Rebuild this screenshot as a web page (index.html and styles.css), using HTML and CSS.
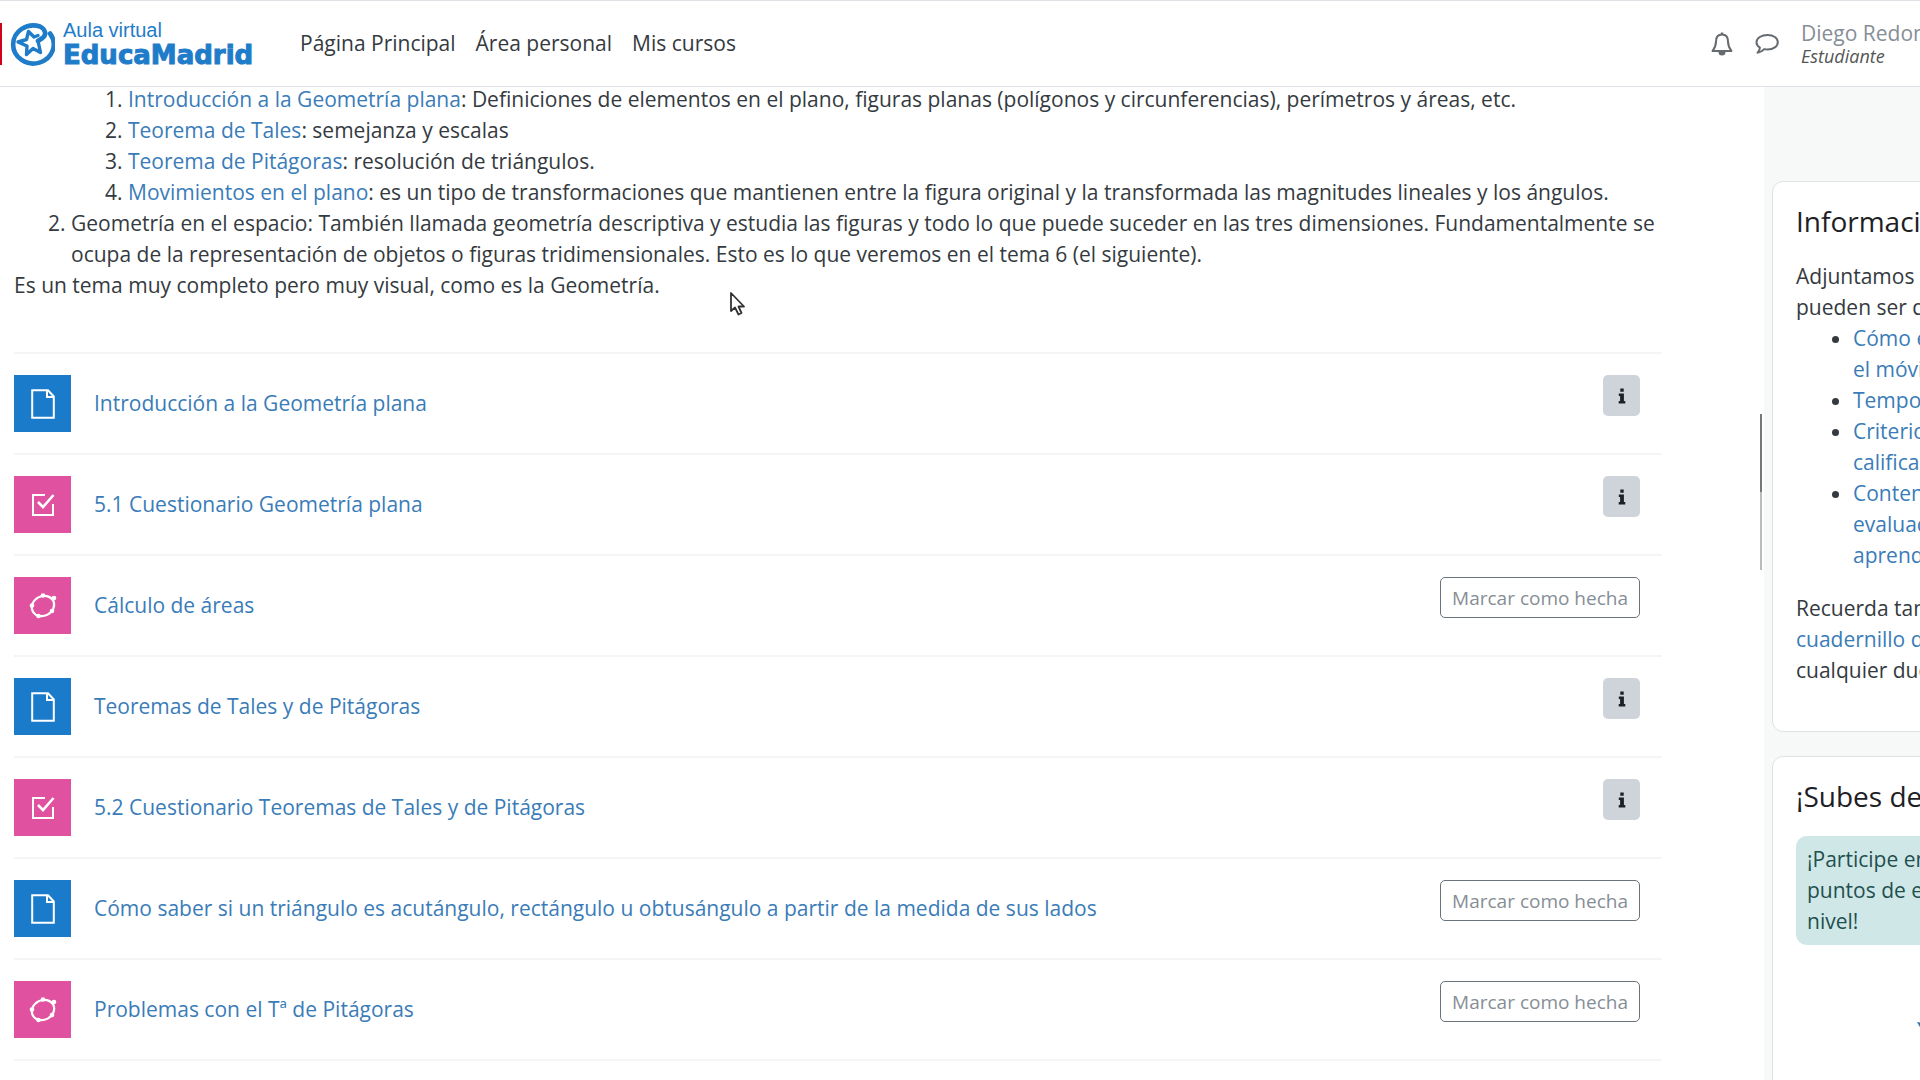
FILE: index.html
```html
<!DOCTYPE html>
<html lang="es">
<head>
  <meta charset="utf-8">
  <title>Aula virtual EducaMadrid</title>
  <link rel="stylesheet" href="styles.css">
</head>
<body>

<!-- Shared icons -->
<svg class="sprite" width="0" height="0" aria-hidden="true">
  <symbol id="icon-page" viewBox="0 0 24 30">
    <path d="M1.2 1.2H17L22.8 7.5V28.8H1.2Z M16 1.2V8H22.8" fill="none" stroke="currentColor" stroke-width="2"/>
  </symbol>
  <symbol id="icon-quiz" viewBox="0 0 24 24">
    <path d="M14 2H2V22H22V11" fill="none" stroke="currentColor" stroke-width="2"/>
    <path d="M7 9L12 14L22.500 2" fill="none" stroke="currentColor" stroke-width="2.600"/>
  </symbol>
  <symbol id="icon-geogebra" viewBox="0 0 28 28">
    <ellipse cx="14" cy="14" rx="11.500" ry="9.800" transform="rotate(-28 14 14)" fill="none" stroke="currentColor" stroke-width="2.200"/>
    <g fill="currentColor">
      <circle cx="14" cy="3.500" r="2.300"/>
      <circle cx="25" cy="6" r="2.300"/>
      <circle cx="23" cy="19" r="2.300"/>
      <circle cx="9.500" cy="24" r="2.300"/>
      <circle cx="3" cy="13.500" r="2.300"/>
    </g>
  </symbol>
  <symbol id="icon-info" viewBox="0 0 8 16">
    <path d="M2.300 0.500H5.700V3.700H2.300Z M0.800 5.500H5.900V13H7.300V15.500H0.700V13H2.100V8H0.800Z" fill="currentColor"/>
  </symbol>
</svg>

<header class="navbar">
  <a class="brand" href="#">
    <span class="brand-flag"></span>
    <svg class="brand-logo" viewBox="0 0 46 44" aria-hidden="true">
      <path d="M41 11.500A20.300 19 0 1 1 31 4.500C37 7.500 37.500 13 33.500 16L29 19" fill="none" stroke="#1f7cc9" stroke-width="4.600" stroke-linecap="round"/>
      <path d="M29 19L31.500 30.500L24 26.500L17.500 32.500L18 24L9 20L17.500 17.500L19.500 9.500L25 15L29 13.500" fill="none" stroke="#1f7cc9" stroke-width="3.400" stroke-linejoin="round" stroke-linecap="round"/>
    </svg>
    <span class="brand-text">
      <span class="brand-small">Aula virtual</span>
      <span class="brand-big">EducaMadrid</span>
    </span>
  </a>
  <nav class="menu">
    <a href="#">Página Principal</a>
    <a href="#">Área personal</a>
    <a href="#">Mis cursos</a>
  </nav>
  <div class="user-area">
    <button type="button" class="icon-btn" aria-label="Notificaciones">
      <svg width="22" height="24" viewBox="0 0 22 24">
        <path d="M11 2.500C7 2.500 5 5.500 5 9.500C5 14.500 3.500 16.500 1.500 19H20.500C18.500 16.500 17 14.500 17 9.500C17 5.500 15 2.500 11 2.500Z" fill="none" stroke="currentColor" stroke-width="2" stroke-linejoin="round"/>
        <path d="M11 0.500V3" stroke="currentColor" stroke-width="2.400"/>
        <path d="M7.500 20H14.500A3.500 3.500 0 0 1 7.500 20Z" fill="currentColor"/>
      </svg>
    </button>
    <button type="button" class="icon-btn" aria-label="Mensajes">
      <svg width="24" height="22" viewBox="0 0 24 22">
        <path d="M12.500 2C18.500 2 22.800 5 22.800 9.200S18.500 16.500 12.500 16.500C11.300 16.500 10.200 16.400 9.200 16.100C7.500 18 5.500 19.400 2.500 19.700C3.800 18.500 4.800 16.800 4.900 14.600C2.700 13.300 1.500 11.400 1.500 9.200C1.500 5 6.500 2 12.500 2Z" fill="none" stroke="currentColor" stroke-width="2" stroke-linejoin="round"/>
      </svg>
    </button>
    <div class="user">
      <span class="user-name">Diego Redon</span>
      <span class="user-role">Estudiante</span>
    </div>
  </div>
</header>

<div class="layout">
  <main class="course">
    <div class="summary">
      <ol class="topics">
        <li class="plain">
          <ol>
            <li><a href="#">Introducción a la Geometría plana</a>: Definiciones de elementos en el plano, figuras planas (polígonos y circunferencias), perímetros y áreas, etc.</li>
            <li><a href="#">Teorema de Tales</a>: semejanza y escalas</li>
            <li><a href="#">Teorema de Pitágoras</a>: resolución de triángulos.</li>
            <li><a href="#">Movimientos en el plano</a>: es un tipo de transformaciones que mantienen entre la figura original y la transformada las magnitudes lineales y los ángulos.</li>
          </ol>
        </li>
        <li>Geometría en el espacio: También llamada geometría descriptiva y estudia las figuras y todo lo que puede suceder en las tres dimensiones. Fundamentalmente se ocupa de la representación de objetos o figuras tridimensionales. Esto es lo que veremos en el tema 6 (el siguiente).</li>
      </ol>
      <p>Es un tema muy completo pero muy visual, como es la Geometría.</p>
    </div>

    <ul class="activities">
      <li class="activity">
        <span class="tile blue"><svg width="24" height="30"><use href="#icon-page"/></svg></span>
        <a href="#">Introducción a la Geometría plana</a>
        <button type="button" class="info" aria-label="Información"><svg width="8" height="16"><use href="#icon-info"/></svg></button>
      </li>
      <li class="activity">
        <span class="tile pink"><svg width="24" height="24"><use href="#icon-quiz"/></svg></span>
        <a href="#">5.1 Cuestionario Geometría plana</a>
        <button type="button" class="info" aria-label="Información"><svg width="8" height="16"><use href="#icon-info"/></svg></button>
      </li>
      <li class="activity">
        <span class="tile pink"><svg width="28" height="28"><use href="#icon-geogebra"/></svg></span>
        <a href="#">Cálculo de áreas</a>
        <button type="button" class="mark">Marcar como hecha</button>
      </li>
      <li class="activity">
        <span class="tile blue"><svg width="24" height="30"><use href="#icon-page"/></svg></span>
        <a href="#">Teoremas de Tales y de Pitágoras</a>
        <button type="button" class="info" aria-label="Información"><svg width="8" height="16"><use href="#icon-info"/></svg></button>
      </li>
      <li class="activity">
        <span class="tile pink"><svg width="24" height="24"><use href="#icon-quiz"/></svg></span>
        <a href="#">5.2 Cuestionario Teoremas de Tales y de Pitágoras</a>
        <button type="button" class="info" aria-label="Información"><svg width="8" height="16"><use href="#icon-info"/></svg></button>
      </li>
      <li class="activity">
        <span class="tile blue"><svg width="24" height="30"><use href="#icon-page"/></svg></span>
        <a href="#">Cómo saber si un triángulo es acutángulo, rectángulo u obtusángulo a partir de la medida de sus lados</a>
        <button type="button" class="mark">Marcar como hecha</button>
      </li>
      <li class="activity">
        <span class="tile pink"><svg width="28" height="28"><use href="#icon-geogebra"/></svg></span>
        <a href="#">Problemas con el Tª de Pitágoras</a>
        <button type="button" class="mark">Marcar como hecha</button>
      </li>
    </ul>
    <span class="drawer-edge"></span>
  </main>

  <aside class="drawer">
    <section class="card">
      <h2>Informaci</h2>
      <p>Adjuntamos a<br>pueden ser d</p>
      <ul>
        <li><a href="#">Cómo e<br>el móvi</a></li>
        <li><a href="#">Tempo</a></li>
        <li><a href="#">Criterio<br>calificac</a></li>
        <li><a href="#">Conten<br>evaluac<br>aprend</a></li>
      </ul>
      <p class="note">Recuerda tan<br><a href="#">cuadernillo d</a><br>cualquier dud</p>
    </section>
    <section class="card levels">
      <h2>¡Subes de</h2>
      <p class="alert">¡Participe en<br>puntos de e<br>nivel!</p>
      <svg class="badge" width="60" height="60" viewBox="0 0 60 60" aria-hidden="true">
        <path d="M0 0L10 2L50 2L60 0L32 50H28Z" fill="#2f74a8"/>
      </svg>
    </section>
  </aside>
</div>

<svg class="cursor" width="18" height="26" viewBox="0 0 18 26" aria-hidden="true">
  <path d="M2 2V20L6 16.500L9.500 23.500L12.500 22L9.500 15.500H15Z" fill="#fff" stroke="#333" stroke-width="1.800" stroke-linejoin="round"/>
</svg>

</body>
</html>
```
FILE: styles.css
```css
* {
  box-sizing: border-box;
}

body {
  margin: 0;
  font-family: "Open Sans", sans-serif;
  font-size: 21px;
  line-height: 31px;
  color: #343a40;
  background-color: #fff;
}

a {
  color: #3a7cb8;
  text-decoration: none;
}

p, h2, ol, ul {
  margin: 0;
}

button {
  font-family: inherit;
  cursor: pointer;
}

.sprite {
  position: absolute;
}

/* Top bar */
.navbar {
  position: relative;
  z-index: 2;
  display: flex;
  align-items: center;
  height: 87px;
  background-color: #fff;
  border-top: 1px solid #dee2e6;
  border-bottom: 1px solid #dee2e6;
}

.brand {
  display: flex;
  align-items: center;
  color: #1f7cc9;
}

.brand-flag {
  width: 2px;
  height: 42px;
  background-color: #d0021b;
}

.brand-logo {
  width: 46px;
  height: 44px;
  margin: 0 8px 0 7px;
}

.brand-text {
  display: flex;
  flex-direction: column;
  width: 193px;
  padding-bottom: 2px;
}

.brand-small {
  font-family: "Liberation Sans", Arial, sans-serif;
  font-size: 20px;
  line-height: 24px;
}

.brand-big {
  font-family: "DejaVu Sans", sans-serif;
  font-size: 26px;
  font-weight: bold;
  line-height: 26px;
  -webkit-text-stroke: 1px #1f7cc9;
}

.menu {
  display: flex;
  gap: 20px;
  margin-left: 44px;
}

.menu a {
  color: #343a40;
}

.user-area {
  display: flex;
  align-items: center;
  width: 209px;
  margin-left: auto;
  overflow: hidden;
  white-space: nowrap;
}

.icon-btn {
  display: flex;
  flex: none;
  margin-right: 22px;
  padding: 0;
  border: none;
  background: none;
  color: #666b70;
}

.user {
  display: flex;
  flex-direction: column;
}

.user-name {
  line-height: 24px;
  color: #868e96;
}

.user-role {
  font-size: 18px;
  font-style: italic;
  line-height: 22px;
  color: #555;
}

/* Page columns */
.layout {
  display: flex;
  height: calc(100vh - 84px);
  margin-top: -3px;
}

.course {
  position: relative;
  flex: 1;
  padding: 0 102px 0 14px;
}

/* Section summary */
.summary {
  margin-bottom: 51px;
}

.summary ol {
  padding-left: 57px;
}

.plain {
  list-style: none;
}

/* Activity list */
.activities {
  padding: 0;
  list-style: none;
  border-bottom: 2px solid #f4f5f6;
}

.activity {
  display: flex;
  align-items: center;
  padding: 21px 22px 21px 0;
  border-top: 2px solid #f4f5f6;
}

.activity a {
  flex: 1;
}

.tile {
  display: flex;
  align-items: center;
  justify-content: center;
  width: 57px;
  height: 57px;
  margin-right: 23px;
  color: #fff;
}

.blue {
  background-color: #1a7bcb;
}

.pink {
  background-color: #e0529f;
}

.info, .mark {
  align-self: flex-start;
  height: 41px;
  border-radius: 5px;
}

.info {
  display: flex;
  align-items: center;
  justify-content: center;
  width: 37px;
  padding: 0;
  border: none;
  background-color: #ced4da;
  color: #1d2125;
}

.mark {
  padding: 0 11px;
  border: 1px solid #6a737b;
  background-color: #fff;
  font-size: 19px;
  color: #868e96;
}

/* Blocks drawer */
.drawer {
  display: flex;
  flex-direction: column;
  gap: 24px;
  width: 156px;
  padding: 97px 0 0 8px;
  overflow: hidden;
  white-space: nowrap;
  background-color: #f7f9f9;
}

.drawer-edge {
  position: absolute;
  top: 330px;
  right: 2px;
  width: 2px;
  height: 156px;
  background: linear-gradient(#777 50%, #bbb 50%);
}

.card {
  flex: none;
  width: 380px;
  height: 551px;
  padding: 23px;
  border: 1px solid #dee2e6;
  border-radius: 11px;
  background-color: #fff;
}

.card h2 {
  margin-bottom: 23px;
  font-size: 28px;
  font-weight: 500;
  line-height: 33px;
  color: #1d2125;
}

.card ul {
  padding-left: 57px;
}

.card .note {
  margin-top: 22px;
}

.card .alert {
  padding: 8px 11px;
  border-radius: 11px;
  background-color: #cfe8e7;
  color: #1f4f4f;
}

.badge {
  display: block;
  margin: 77px 0 0 121px;
}

.cursor {
  position: absolute;
  top: 291px;
  left: 729px;
}
```
